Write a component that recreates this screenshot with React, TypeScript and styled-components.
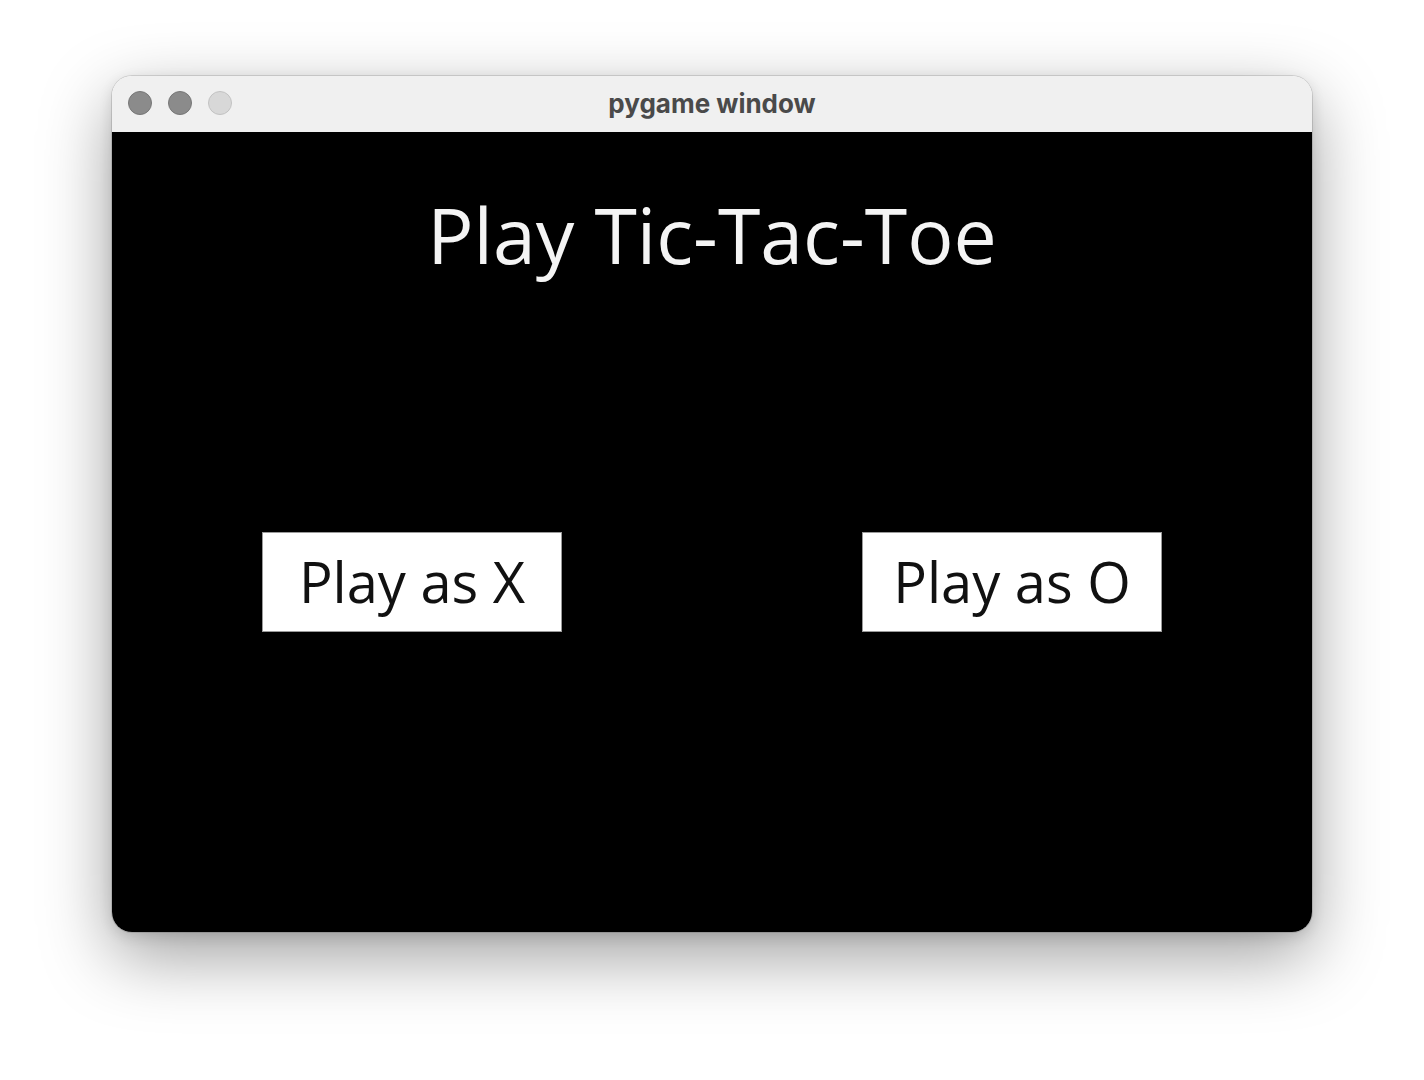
import React from "react";
import styled, { createGlobalStyle } from "styled-components";

const Global = createGlobalStyle`
  html, body { margin: 0; padding: 0; background: #ffffff; }
  body { width: 1424px; height: 1080px; overflow: hidden; }
`;

const Page = styled.div`
  padding-top: 76px;
  display: flex;
  justify-content: center;
`;

const Window = styled.div`
  width: 1200px;
  border-radius: 20px;
  overflow: hidden;
  box-shadow: 0 0 0 1px rgba(0, 0, 0, 0.12), 0 24px 70px rgba(0, 0, 0, 0.38), 0 4px 14px rgba(0, 0, 0, 0.12);
  display: flex;
  flex-direction: column;
`;

const TitleBar = styled.div`
  height: 56px;
  background: #f0f0f0;
  position: relative;
  display: flex;
  align-items: center;
  justify-content: center;
`;

const Lights = styled.div`
  position: absolute;
  left: 16px;
  top: 15px;
  display: flex;
  gap: 16px;
`;

const Light = styled.span<{ $dim?: boolean }>`
  width: 24px;
  height: 24px;
  border-radius: 50%;
  box-sizing: border-box;
  background: ${(p) => (p.$dim ? "#d8d8d8" : "#8b8b8b")};
  border: 1px solid ${(p) => (p.$dim ? "#c2c2c2" : "#777777")};
`;

const WindowTitle = styled.div`
  font-family: Inter, "Liberation Sans", sans-serif;
  font-weight: 700;
  font-size: 26px;
  color: #4a4a4a;
  margin-top: -2px;
`;

const Canvas = styled.div`
  height: 800px;
  background: #000000;
  display: flex;
  flex-direction: column;
  align-items: center;
`;

const Heading = styled.div`
  margin-top: 53px;
  font-family: "Open Sans", "Noto Sans", sans-serif;
  font-size: 77px;
  line-height: 100px;
  color: #f4f4f4;
`;

const ButtonRow = styled.div`
  margin-top: 247px;
  display: flex;
  gap: 300px;
`;

const PlayButton = styled.div`
  width: 300px;
  height: 100px;
  box-sizing: border-box;
  background: #ffffff;
  border: 1px solid #9a9a9a;
  display: flex;
  align-items: center;
  justify-content: center;
  font-family: "Open Sans", "Noto Sans", sans-serif;
  font-size: 56px;
  color: #111111;
  padding-bottom: 2px;
`;

export default function App() {
  return (
    <>
      <Global />
      <Page>
        <Window>
          <TitleBar>
            <Lights>
              <Light />
              <Light />
              <Light $dim />
            </Lights>
            <WindowTitle>pygame window</WindowTitle>
          </TitleBar>
          <Canvas>
            <Heading>Play Tic-Tac-Toe</Heading>
            <ButtonRow>
              <PlayButton>Play as X</PlayButton>
              <PlayButton>Play as O</PlayButton>
            </ButtonRow>
          </Canvas>
        </Window>
      </Page>
    </>
  );
}
